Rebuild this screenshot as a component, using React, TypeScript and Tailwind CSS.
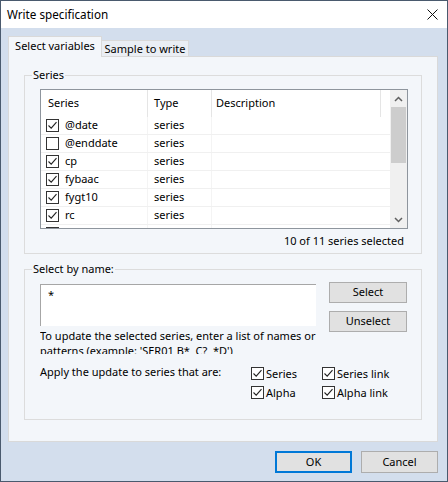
import { ReactNode } from "react";

interface Row {
  name: string;
  type: string;
  checked: boolean;
}

const rows: Row[] = [
  { name: "@date", type: "series", checked: true },
  { name: "@enddate", type: "series", checked: false },
  { name: "cp", type: "series", checked: true },
  { name: "fybaac", type: "series", checked: true },
  { name: "fygt10", type: "series", checked: true },
  { name: "rc", type: "series", checked: true },
  { name: "rcfc", type: "series", checked: true },
];

function CheckBox({ checked }: { checked: boolean }) {
  return (
    <span className="flex h-[13px] w-[13px] shrink-0 items-center justify-center border border-[#333333] bg-white">
      {checked && (
        <svg width="11" height="11" viewBox="0 0 11 11">
          <path d="M1.5 5.5 L4.2 8.2 L9.5 2.2" fill="none" stroke="#222" strokeWidth="1.1" />
        </svg>
      )}
    </span>
  );
}

function GroupBox({ label, className, children }: { label: string; className: string; children: ReactNode }) {
  return (
    <div className={`relative border border-[#dcdcdc] ${className}`}>
      {/* legend sits over the top border */}
      <span className="absolute -top-[9px] left-[7px] bg-[#f3f6fa] px-[1px] leading-[16px]">{label}</span>
      {children}
    </div>
  );
}

function Button({ label, primary, className }: { label: string; primary?: boolean; className: string }) {
  return (
    <div
      className={`flex items-center justify-center bg-[#e1e1e1] ${
        primary ? "border-2 border-[#0078d7]" : "border border-[#adadad]"
      } ${className}`}
    >
      {label}
    </div>
  );
}

function Check({ label }: { label: string }) {
  return (
    <div className="flex items-center gap-[2px]">
      <CheckBox checked />
      <span>{label}</span>
    </div>
  );
}

export default function App() {
  return (
    <div
      className="flex h-[482px] w-[448px] flex-col border border-[#4a5a6e] bg-[#d3deed] text-[11px] text-black"
      style={{ fontFamily: '"Noto Sans", "Open Sans", sans-serif' }}
    >
      {/* Title bar */}
      <div className="flex h-[27px] shrink-0 items-center justify-between bg-white pl-[6px] pr-[9px]">
        <span className="text-[11.7px]">Write specification</span>
        <svg width="11" height="11" viewBox="0 0 11 11">
          <path d="M0.5 0.5 L10.5 10.5 M10.5 0.5 L0.5 10.5" stroke="#111" strokeWidth="1" />
        </svg>
      </div>

      <div className="flex flex-1 flex-col px-[7px] pt-[8px]">
        {/* Tabs */}
        <div className="flex h-[21px] items-end">
          <div className="relative z-10 flex h-[21px] w-[94px] items-center justify-center border border-b-0 border-[#d9d9d9] bg-[#f3f6fa] pb-[1px]">
            Select variables
          </div>
          <div className="flex h-[17px] w-[87px] items-center justify-center border border-b-0 border-l-0 border-[#d9d9d9] bg-[#eaeef4]">
            Sample to write
          </div>
        </div>

        {/* Panel */}
        <div className="-mt-px flex h-[386px] w-[430px] flex-col border border-[#d9d9d9] bg-[#f3f6fa] pl-[15px]">
          <GroupBox label="Series" className="mt-[18px] h-[179px] w-[398px]">
            <div className="ml-[15px] mt-[13px] flex h-[140px] w-[368px] overflow-hidden border border-[#8e959d] bg-white">
              <div className="flex-1">
                <div className="flex h-[27px] items-center">
                  <div className="flex h-full w-[107px] items-center border-r border-[#e5e5e5] pl-[7px]">Series</div>
                  <div className="flex h-full w-[64px] items-center border-r border-[#e5e5e5] pl-[6px]">Type</div>
                  <div className="flex h-full w-[169px] items-center border-r border-[#e5e5e5] pl-[4px]">Description</div>
                </div>
                {rows.map((r) => (
                  <div key={r.name} className="flex h-[18px] items-center border-b border-[#f0f0f0]">
                    <div className="flex h-full w-[107px] items-center gap-[6px] border-r border-[#f4f4f4] pl-[5px]">
                      <CheckBox checked={r.checked} />
                      <span>{r.name}</span>
                    </div>
                    <div className="flex h-full w-[64px] items-center border-r border-[#f4f4f4] pl-[6px]">{r.type}</div>
                    <div className="h-full w-[169px]" />
                  </div>
                ))}
              </div>
              {/* Scrollbar */}
              <div className="flex w-[17px] flex-col bg-[#f0f0f0]">
                <div className="flex h-[17px] items-center justify-center">
                  <svg width="9" height="6" viewBox="0 0 9 6">
                    <path d="M1 5 L4.5 1.5 L8 5" fill="none" stroke="#606060" strokeWidth="1.5" />
                  </svg>
                </div>
                <div className="mx-[1px] h-[56px] bg-[#cdcdcd]" />
                <div className="flex-1" />
                <div className="flex h-[17px] items-center justify-center">
                  <svg width="9" height="6" viewBox="0 0 9 6">
                    <path d="M1 1 L4.5 4.5 L8 1" fill="none" stroke="#606060" strokeWidth="1.5" />
                  </svg>
                </div>
              </div>
            </div>
            <div className="mt-[4px] pr-[17px] text-right leading-[16px]">10 of 11 series selected</div>
          </GroupBox>

          <GroupBox label="Select by name:" className="mt-[15px] h-[151px] w-[398px]">
            <div className="ml-[15px] mt-[14px] flex items-start gap-[13px]">
              <div className="flex w-[276px] flex-col">
                <div className="h-[42px] border-l border-t border-[#a6a6a6] bg-white pl-[7px] pt-[3px] leading-[14px]">
                  *
                </div>
                <div className="mt-[2px] h-[26px] overflow-hidden whitespace-nowrap leading-[15px]">
                  <div>To update the selected series, enter a list of names or</div>
                  <div>patterns (example: 'SER01 B*&nbsp;&nbsp;C?&nbsp;&nbsp;*D')</div>
                </div>
              </div>
              <div className="-mt-[2px] flex w-[78px] flex-col gap-[8px]">
                <Button label="Select" className="h-[21px]" />
                <Button label="Unselect" className="h-[21px]" />
              </div>
            </div>
            <div className="ml-[15px] mt-[10px] flex items-start">
              <span className="w-[211px] leading-[15px]">Apply the update to series that are:</span>
              <div className="mt-[3px] grid grid-cols-[71px_80px] gap-y-[6px] leading-[13px]">
                <Check label="Series" />
                <Check label="Series link" />
                <Check label="Alpha" />
                <Check label="Alpha link" />
              </div>
            </div>
          </GroupBox>
        </div>

        {/* Footer */}
        <div className="mt-[9px] flex justify-end gap-[9px] pr-[2px]">
          <Button label="OK" primary className="h-[22px] w-[77px]" />
          <Button label="Cancel" className="h-[22px] w-[77px]" />
        </div>
      </div>
    </div>
  );
}
